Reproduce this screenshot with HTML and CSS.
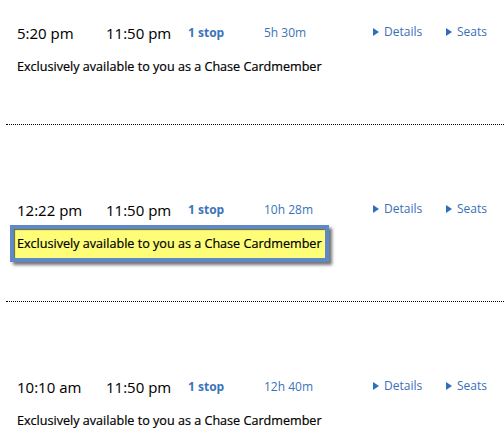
FILE: index.html
```html
<!DOCTYPE html>
<html>
<head>
<meta charset="utf-8">
<link rel="stylesheet" href="styles.css">
</head>
<body>
<div class="list">
  <div class="flight first">
    <div class="row">
      <span class="time">5:20 pm</span>
      <span class="time">11:50 pm</span>
      <span class="stops">1 stop</span>
      <span class="dur">5h 30m</span>
      <a class="link"><span class="tri"></span>Details</a>
      <a class="link"><span class="tri"></span>Seats</a>
    </div>
    <div class="note">Exclusively available to you as a Chase Cardmember</div>
  </div>
  <div class="sep"></div>
  <div class="flight">
    <div class="row">
      <span class="time">12:22 pm</span>
      <span class="time">11:50 pm</span>
      <span class="stops">1 stop</span>
      <span class="dur">10h 28m</span>
      <a class="link"><span class="tri"></span>Details</a>
      <a class="link"><span class="tri"></span>Seats</a>
    </div>
    <div class="note"><span class="highlight">Exclusively available to you as a Chase Cardmember</span></div>
  </div>
  <div class="sep"></div>
  <div class="flight">
    <div class="row">
      <span class="time">10:10 am</span>
      <span class="time">11:50 pm</span>
      <span class="stops">1 stop</span>
      <span class="dur">12h 40m</span>
      <a class="link"><span class="tri"></span>Details</a>
      <a class="link"><span class="tri"></span>Seats</a>
    </div>
    <div class="note">Exclusively available to you as a Chase Cardmember</div>
  </div>
</div>
</body>
</html>
```
FILE: styles.css
```css
html, body {
  margin: 0;
  padding: 0;
  background: #fff;
}
body {
  font-family: "Open Sans", "Liberation Sans", sans-serif;
  color: #111;
  overflow: hidden;
}
.list {
  padding-top: 23px;
}
.flight {
  padding-left: 17px;
  margin-top: 75px;
}
.flight.first {
  margin-top: 0;
}
.row {
  display: grid;
  grid-template-columns: 89px 82px 76px 109px 73px auto;
  align-items: center;
  height: 20px;
}
.time {
  font-size: 15px;
  line-height: 20px;
  color: #000;
  -webkit-text-stroke: 0.05px #000;
}
.stops {
  font-size: 12px;
  font-weight: 700;
  color: #3a74b9;
  line-height: 20px;
}
.dur {
  font-size: 12px;
  color: #3a74b9;
  line-height: 20px;
  margin-top: -1px;
}
.link {
  display: flex;
  align-items: center;
  gap: 5px;
  font-size: 12px;
  color: #3a6fb6;
  line-height: 20px;
  margin-top: -3px;
}
.tri {
  width: 0;
  height: 0;
  border-top: 4.5px solid transparent;
  border-bottom: 4.5px solid transparent;
  border-left: 6px solid #2d6fba;
}
.note {
  margin-top: 15px;
  font-size: 12.6px;
  line-height: 18px;
  color: #000;
  -webkit-text-stroke: 0.2px #000;
}
.highlight {
  display: inline-block;
  background: #fdfd78;
  border: 4px solid #5e88c7;
  padding: 6px 3px 5px 3px;
  margin: -10px 0 -9px -7px;
  box-shadow: 3px 3px 3px rgba(0, 0, 0, 0.55), inset 1px 1px 1px rgba(0, 0, 0, 0.6);
}
.sep {
  margin: 48px 0 0 6px;
  border-top: 1px dotted #000;
}
```
